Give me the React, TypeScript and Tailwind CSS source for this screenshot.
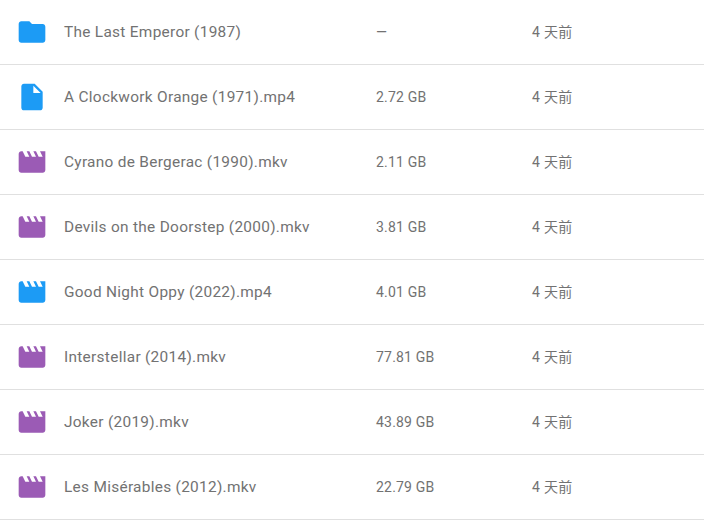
type Row = { name: string; size: string; kind: "folder" | "file" | "movie"; color: string };

const rows: Row[] = [
  { name: "The Last Emperor (1987)", size: "—", kind: "folder", color: "text-[#1c9bf5]" },
  { name: "A Clockwork Orange (1971).mp4", size: "2.72 GB", kind: "file", color: "text-[#1c9bf5]" },
  { name: "Cyrano de Bergerac (1990).mkv", size: "2.11 GB", kind: "movie", color: "text-[#9b5bb5]" },
  { name: "Devils on the Doorstep (2000).mkv", size: "3.81 GB", kind: "movie", color: "text-[#9b5bb5]" },
  { name: "Good Night Oppy (2022).mp4", size: "4.01 GB", kind: "movie", color: "text-[#1c9bf5]" },
  { name: "Interstellar (2014).mkv", size: "77.81 GB", kind: "movie", color: "text-[#9b5bb5]" },
  { name: "Joker (2019).mkv", size: "43.89 GB", kind: "movie", color: "text-[#9b5bb5]" },
  { name: "Les Misérables (2012).mkv", size: "22.79 GB", kind: "movie", color: "text-[#9b5bb5]" },
];

const paths = {
  folder: "M10 4H4c-1.1 0-1.99.9-1.99 2L2 18c0 1.1.9 2 2 2h16c1.1 0 2-.9 2-2V8c0-1.1-.9-2-2-2h-8l-2-2z",
  file: "M6 2c-1.1 0-1.99.9-1.99 2L4 20c0 1.1.89 2 1.99 2H18c1.1 0 2-.9 2-2V8l-6-6H6zm7 7V3.500L18.500 9H13z",
  movie: "M18 4l2 4h-3l-2-4h-2l2 4h-3l-2-4H8l2 4H7L5 4H4c-1.100 0-1.990.9-1.990 2L2 18c0 1.100.9 2 2 2h16c1.100 0 2-.9 2-2V4h-4z",
};

export default function App() {
  return (
    <div className="h-[520px] w-[704px] overflow-hidden bg-white font-[Roboto,'Noto_Sans_CJK_SC',sans-serif] text-[#727272]">
      {rows.map((row) => (
        <div key={row.name} className="flex h-[65px] items-center border-b border-[#e0e0e0]">
          <div className="flex w-16 shrink-0 pl-4">
            <svg viewBox="0 0 24 24" className={`size-8 ${row.color}`} fill="currentColor">
              <path d={paths[row.kind]} />
            </svg>
          </div>
          <div className="w-[312px] shrink-0 text-[15.4px] leading-6 tracking-[0.3px]">{row.name}</div>
          <div className="w-[156px] shrink-0 text-sm leading-5 tracking-[0.2px]">{row.size}</div>
          <div className="text-sm leading-5 tracking-[0.3px]">4 天前</div>
        </div>
      ))}
    </div>
  );
}
